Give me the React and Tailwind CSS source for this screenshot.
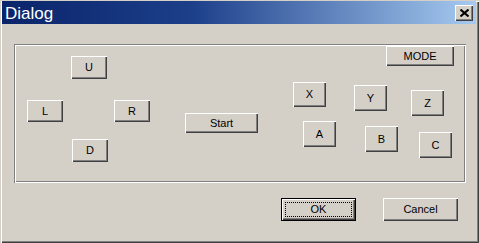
import React from 'react';

const raised =
  'shadow-[inset_1px_1px_0_#ffffff,inset_-1px_-1px_0_#404040,inset_-2px_-2px_0_#808080]';

function Btn({ label, className = '' }) {
  return (
    <button
      className={`flex items-center justify-center bg-[#d4d0c8] text-[11px] text-black ${raised} ${className}`}
    >
      {label}
    </button>
  );
}

// scattered controls inside the group box, like a dialog template
const pads = [
  { label: 'MODE', cls: 'left-[372px] top-[2px] w-[68px] h-[20px]' },
  { label: 'U', cls: 'left-[57px] top-[12px] w-[36px] h-[23px]' },
  { label: 'L', cls: 'left-[13px] top-[56px] w-[36px] h-[22px]' },
  { label: 'R', cls: 'left-[100px] top-[56px] w-[36px] h-[22px]' },
  { label: 'D', cls: 'left-[58px] top-[95px] w-[36px] h-[23px]' },
  { label: 'Start', cls: 'left-[171px] top-[69px] w-[73px] h-[20px]' },
  { label: 'X', cls: 'left-[279px] top-[38px] w-[33px] h-[25px]' },
  { label: 'Y', cls: 'left-[340px] top-[41px] w-[33px] h-[26px]' },
  { label: 'Z', cls: 'left-[397px] top-[46px] w-[33px] h-[26px]' },
  { label: 'A', cls: 'left-[289px] top-[77px] w-[33px] h-[26px]' },
  { label: 'B', cls: 'left-[351px] top-[82px] w-[33px] h-[26px]' },
  { label: 'C', cls: 'left-[405px] top-[88px] w-[33px] h-[26px]' },
];

export default function App() {
  return (
    <div
      className="w-[479px] h-[243px] flex flex-col bg-[#d4d0c8] pl-[2px] pt-[1px] pr-[3px] shadow-[inset_1px_1px_0_#d4d0c8,inset_2px_2px_0_#ffffff,inset_-1px_-1px_0_#404040,inset_-2px_-2px_0_#808080]"
      style={{ fontFamily: '"Liberation Sans", Arial, sans-serif' }}
    >
      {/* title bar */}
      <div className="h-[23px] flex items-center justify-between pl-[3px] pr-[3px] bg-[linear-gradient(to_right,#0a246a_0%,#1c3f8a_40%,#a6caf0_100%)]">
        <span className="text-white text-[17px] leading-none pt-[1px]">Dialog</span>
        <button className={`w-[18px] h-[16px] flex items-center justify-center bg-[#d4d0c8] ${raised}`}>
          <svg width="9" height="8" viewBox="0 0 9 8">
            <path d="M0.5 0.5 L8.5 7.5 M8.5 0.5 L0.5 7.5" stroke="#000" strokeWidth="2" />
          </svg>
        </button>
      </div>

      {/* body */}
      <div className="flex flex-col pt-[20px] pl-[12px]">
        <div className="relative w-[452px] h-[139px] shadow-[inset_1px_1px_0_#808080,inset_2px_2px_0_#ffffff,inset_-1px_-1px_0_#ffffff,inset_-2px_-2px_0_#808080]">
          {pads.map((p) => (
            <Btn key={p.label} label={p.label} className={`absolute ${p.cls}`} />
          ))}
        </div>

        <div className="flex justify-end gap-[27px] mt-[15px] pr-[18px]">
          <div className="w-[75px] h-[23px] border border-black">
            <div className={`relative w-full h-full flex items-center justify-center bg-[#d4d0c8] text-[11px] ${raised}`}>
              <div className="absolute inset-[3px] border border-dotted border-black" />
              OK
            </div>
          </div>
          <Btn label="Cancel" className="w-[75px] h-[23px]" />
        </div>
      </div>
    </div>
  );
}
